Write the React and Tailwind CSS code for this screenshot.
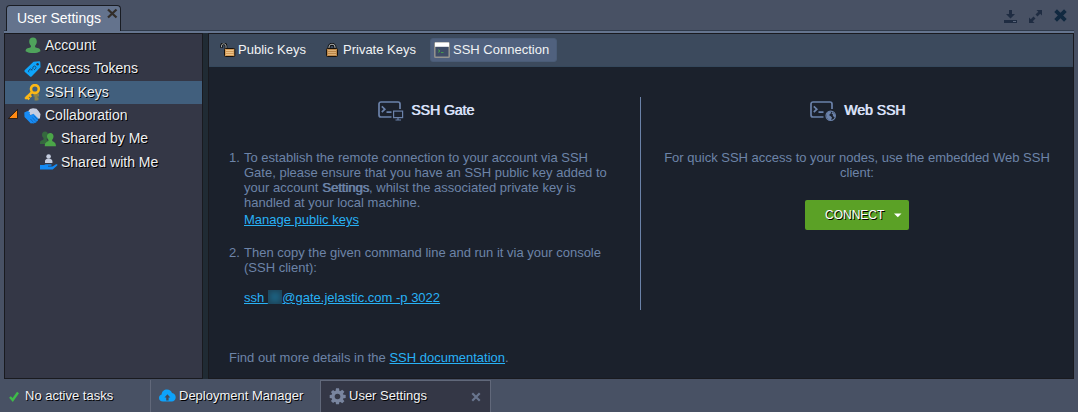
import React from "react";

const shadow = "[text-shadow:1px_1px_0_#000]";

function AccountIcon() {
  return (
    <svg width="16" height="17" viewBox="0 0 16 17" fill="#4fa35c">
      <path d="M8 .5c2.400 0 3.800 1.500 3.800 4 0 1.700-.6 3.200-1.700 4.200v1.300c.6.700 2 .8 3.400 1.200 1.500.6 1.900 1.500 1.900 3C13.500 15.600 10.900 16 8 16S2.500 15.600.6 14.200c0-1.500.4-2.400 1.900-3 1.400-.4 2.800-.5 3.400-1.200V8.700C4.800 7.700 4.200 6.200 4.200 4.500c0-2.500 1.400-4 3.800-4z" />
    </svg>
  );
}

function TagIcon() {
  return (
    <svg width="17" height="16" viewBox="0 0 17 16">
      <path d="M9.500.8 15 .3a1.200 1.200 0 0 1 1.300 1.200l.2 4.800-8.700 9a1.500 1.500 0 0 1-2.100 0L.9 11a1.500 1.500 0 0 1 0-2.100z" fill="#0ea5fb" />
      <circle cx="13.600" cy="3.200" r="1.200" fill="#343746" />
      <path d="M5 11.300a1.500 1.500 0 0 1 0-2.200l1.600-1.300 1.500 1.500M6.800 9.400l3-2.700M8.300 6.600l1.200-1.200a1.500 1.500 0 0 1 2.100 2.100L10 9" fill="none" stroke="#184b78" strokeWidth="1" />
    </svg>
  );
}

function KeyIcon() {
  return (
    <svg width="17" height="17" viewBox="0 0 17 17" fill="none">
      <path d="M9.500 11h5.500M12 8v8.500M12 14.800h2.500" stroke="#8d8349" strokeWidth="2.800" />
      <circle cx="10.900" cy="5" r="3.900" stroke="#fcb815" strokeWidth="2.600" />
      <path d="M8.200 7.800 1.200 14.800M2 12.200l3.300 3.200M4.300 10l3 3" stroke="#fcb815" strokeWidth="2.400" />
    </svg>
  );
}

function HandshakeIcon() {
  return (
    <svg width="17" height="16" viewBox="0 0 17 16">
      <path d="M4 3.500 6 1l3-.8 3.500.6L14.500 3l2 3-.6 4.500-1.600.3L9 6.500 6.500 7 5 6z" fill="#c5cde0" />
      <path d="M.3 4.500 3.500 3 6 4.200 5.500 6.500l1.200.8L9.500 5.800l5 5-.7 1.200.1 1.100-1.500.4-.2 1.200-1.600.1-.6.800-2-.3-1.200.2L3.500 12l-3-3z" fill="#178cf5" />
      <path d="m8.300 9.500 3.500 4M10 7.800l3.600 4M6.500 11l3 3.500" stroke="#1265b5" strokeWidth=".8" />
    </svg>
  );
}

function SharedByIcon() {
  return (
    <svg width="16" height="16" viewBox="0 0 16 16">
      <path d="M5 .5c2 0 3 1.300 3 3.200 0 1.500-.5 2.500-1.200 3.200V9L9 10.500v2.500H0c0-3 .5-3.300 2-3.800L3.500 8.500V6.900C2.600 6.200 2 5.200 2 3.700 2 1.800 3 .5 5 .5z" fill="#35693e" />
      <path d="M10.300 2c2 0 3.200 1.300 3.200 3.300 0 1.500-.5 2.700-1.300 3.500V10c.8.700 3.500.9 3.700 4.300v.9H4.800v-.9c.2-3.400 2.900-3.600 3.600-4.300V8.800C7.500 8 7 6.800 7 5.300 7 3.300 8.300 2 10.300 2z" fill="#4ba548" />
    </svg>
  );
}

function SharedWithIcon() {
  return (
    <svg width="18" height="17" viewBox="0 0 18 17">
      <circle cx="8.600" cy="2.500" r="2.300" fill="#c5cde0" />
      <path d="M5 9V7C5 5.600 6.300 5 7.300 4.700h2.600c1 .3 2.500.9 2.500 2.300v2z" fill="#c5cde0" />
      <path d="M0 11h4l1.800-.8h5c1.300 0 1.300 1.500 0 1.500H8v.7h4.500L16 10.300c1-.5 2 .3 1.200 1.100l-4.500 4.200H0z" fill="#148af4" />
    </svg>
  );
}

function PadlockIcon({ open }) {
  return open ? (
    <svg width="16" height="14" viewBox="0 0 16 14">
      <path d="M1.500 4.800V3A2.200 2.200 0 0 1 6 3v3.500" fill="none" stroke="#0b0c0e" strokeWidth="2.600" />
      <path d="M1.500 4.200V3A2.200 2.200 0 0 1 6 3v3.500" fill="none" stroke="#a5a8a8" strokeWidth="1" />
      <rect x="4.500" y="5.500" width="10.300" height="8" rx="1" fill="#d29a58" stroke="#17120d" />
      <path d="M6 7.500h7.500M6 9.500h7.500M6 11.500h7.500" stroke="#ecc48a" strokeWidth="1" />
    </svg>
  ) : (
    <svg width="12" height="14" viewBox="0 0 12 14">
      <path d="M3 6.500V4.300a3 3 0 0 1 6 0v2.200" fill="none" stroke="#0b0c0e" strokeWidth="2.900" />
      <path d="M3 6.500V4.300a3 3 0 0 1 6 0v2.200" fill="none" stroke="#a5a8a8" strokeWidth="1.100" />
      <rect x=".5" y="5.500" width="11" height="8" rx="1" fill="#bb8648" stroke="#17120d" />
      <path d="M2 7.500h8M2 9.500h8M2 11.500h8" stroke="#dcb076" strokeWidth="1" />
    </svg>
  );
}

function TerminalIcon() {
  return (
    <svg width="16" height="16" viewBox="0 0 16 16">
      <rect x=".8" y=".8" width="14.400" height="14.400" rx=".8" fill="#3e4c66" stroke="#94948f" strokeWidth="1.500" />
      <path d="M1 .5h14v4.300H1z" fill="#fff" />
      <path d="m4 7.500 2 1.500-2 1.500M7 10.500h2.500" fill="none" stroke="#45a249" strokeWidth=".9" />
    </svg>
  );
}

function GateIcon({ web }) {
  return (
    <svg width="27" height="21" viewBox="0 0 27 21" fill="none" stroke="#6b82aa" strokeWidth="1.700">
      <path d="M13.500 16H3a2 2 0 0 1-2-2V3a2 2 0 0 1 2-2h17a2 2 0 0 1 2 2v5" />
      <path d="m3.800 5.300 3 2.900-3 2.900M8.500 11.200h5" />
      {web ? (
        <>
          <circle cx="20.700" cy="14.800" r="4.700" strokeWidth="1.200" />
          <path d="m16.500 13 2-2.500 2.700.5-.7 1.700-1.500 1.300 1.700 1.300 1.300 1.200-1 2.800-2.500-.6-1.700-2.200zM22.500 11l2.500 2.500v3l-2.200-1.500.2-1.500-1.500-1z" fill="#6b82aa" stroke="none" />
        </>
      ) : (
        <>
          <rect x="15.600" y="10.100" width="9" height="6.500" strokeWidth="1.200" />
          <path d="M20 17v2M17.500 19h5.500" strokeWidth="1.200" />
        </>
      )}
    </svg>
  );
}

function Cross({ size, color, width }) {
  return (
    <svg width={size} height={size} viewBox="0 0 12 12">
      <path d="m1.500 1.500 9 9m0-9-9 9" stroke={color} strokeWidth={width} />
    </svg>
  );
}

function CloudIcon() {
  return (
    <svg width="17" height="13" viewBox="0 0 17 13">
      <path d="M4 12.500C1.500 12.500 0 11 0 9c0-1.700 1-3 2.600-3.400C2.800 2.500 5 .5 8 .5c2.500 0 4.200 1.200 5 3.500 2.300.3 3.700 2 3.700 4.300 0 2.700-1.600 4.200-4 4.200z" fill="#0da2fb" />
      <path d="M7.200 11.500V8.500H5.500L8.400 5.300l2.900 3.200H9.600v3z" fill="#414a5c" />
    </svg>
  );
}

function GearIcon() {
  const teeth = [0, 45, 90, 135];
  return (
    <svg width="17" height="17" viewBox="0 0 17 17">
      {teeth.map((a) => (
        <path key={a} d="M7 .3h3l.5 3v10l-.5 3H7l-.5-3v-10z" fill="#79859f" transform={`rotate(${a} 8.500 8.500)`} />
      ))}
      <circle cx="8.500" cy="8.500" r="6" fill="#79859f" />
      <circle cx="8.500" cy="8.500" r="2.800" fill="#343746" />
    </svg>
  );
}

const tree = [
  { label: "Account", icon: <AccountIcon />, box: "pl-[20px]", w: "w-5", lift: "-mt-px" },
  { label: "Access Tokens", icon: <TagIcon />, box: "pl-[19px]", w: "w-[21px]", lift: "-mt-[2px]" },
  { label: "SSH Keys", icon: <KeyIcon />, box: "pl-[19px] bg-[#415f7d]", w: "w-[21px]", lift: "-mt-px" },
  { label: "Collaboration", icon: <HandshakeIcon />, box: "pl-[3px]", w: "w-[21px]", lift: "-mt-px", open: true },
  { label: "Shared by Me", icon: <SharedByIcon />, box: "pl-[35px]", w: "w-[21px]", lift: "-mt-[2px]" },
  { label: "Shared with Me", icon: <SharedWithIcon />, box: "pl-[35px]", w: "w-[21px]", lift: "-mt-px" },
];

function Sidebar() {
  return (
    <nav className="w-[199px] shrink-0 border border-[#191a1f] bg-[#343746]">
      {tree.map((t) => (
        <div key={t.label} className={`flex h-[23.4px] items-center text-[14px] leading-[20px] text-[#eef0f2] ${shadow} ${t.box}`}>
          {t.open && (
            <svg className="mr-[6px] -mt-[3px] shrink-0" width="10" height="10" viewBox="0 0 10 10">
              <path d="M9.500.4v9.100H.4z" fill="#ff8a13" stroke="#15100d" strokeWidth=".8" />
            </svg>
          )}
          <span className={`block shrink-0 ${t.w}`}>{t.icon}</span>
          <span className={`whitespace-nowrap ${t.lift}`}>{t.label}</span>
        </div>
      ))}
    </nav>
  );
}

function Toolbar() {
  return (
    <div className="flex h-[33px] items-center border-b border-[#35485c] bg-[#3c4a5d] pl-[11px] text-[13px] leading-4 text-[#f1f3f5]">
      <div className="flex w-[106px] items-center">
        <span className="w-[18px]"><PadlockIcon open /></span>
        <span>Public Keys</span>
      </div>
      <div className="flex w-[104px] items-center">
        <span className="w-[17px]"><PadlockIcon /></span>
        <span>Private Keys</span>
      </div>
      <div className="flex h-6 w-[127px] items-center gap-[3px] rounded-[3px] border border-[#4a5c77] bg-[#50617e] pl-[3px]">
        <TerminalIcon />
        <span className="whitespace-nowrap">SSH Connection</span>
      </div>
    </div>
  );
}

const link = "text-[#28b2f6] underline";
const heavy = "[text-shadow:0.7px_0_0_currentColor]";

function Content() {
  return (
    <main className="flex min-w-0 grow flex-col border border-[#191a1f] bg-[#1b212c] text-[13px] leading-[15px] text-[#6d84a8]">
      <Toolbar />
      <div className="flex pt-[30px]">
        <section className="h-[213px] w-[432px] shrink-0 border-r border-[#6b82a8] pl-5">
          <div className="flex h-[26px] items-center pl-[149px] text-[14px] leading-[18px] text-[#dbe2fa]">
            <span className="w-[33px] pt-[2px]"><GateIcon /></span>
            <span className={heavy}>SSH Gate</span>
          </div>
          <ol className="pt-[27px]">
            <li className="flex">
              <span className="w-[15px] shrink-0">1.</span>
              <div className="whitespace-nowrap">
                To establish the remote connection to your account via SSH<br />
                Gate, please ensure that you have an SSH public key added to<br />
                your account <span className={heavy}>Settings</span>, whilst the associated private key is<br />
                handled at your local machine.
                <div className="pt-[2px]"><a className={link}>Manage public keys</a></div>
              </div>
            </li>
            <li className="flex pt-[18px]">
              <span className="w-[15px] shrink-0">2.</span>
              <div className="whitespace-nowrap">
                Then copy the given command line and run it via your console<br />
                (SSH client):
                <div className={`flex pt-[15px] ${link}`}>
                  <span className="whitespace-pre">ssh </span>
                  <span className="h-[14px] w-[14.500px] bg-[#1d607f] shadow-[inset_0_0_5px_2px_#1d4459]" />
                  <span>@gate.jelastic.com -p 3022</span>
                </div>
              </div>
            </li>
          </ol>
        </section>
        <section className="grow text-center">
          <div className="flex h-[26px] items-center pl-[169px] text-[14px] leading-[18px] text-[#dbe2fa]">
            <span className="w-[34px] pt-[2px]"><GateIcon web /></span>
            <span className={heavy}>Web SSH</span>
          </div>
          <p className="pt-[27px] whitespace-nowrap">
            For quick SSH access to your nodes, use the embedded Web SSH<br />client:
          </p>
          <button className={`mt-[20px] flex h-[30px] w-[104px] items-center rounded-[2px] bg-[#5ba126] pl-5 text-[12px] text-[#fff] ml-[164px] ${shadow}`}>
            <span className="w-[69px] text-left">CONNECT</span>
            <svg width="8" height="5" viewBox="0 0 8 5"><path d="M0 .5h7.500L3.800 4.300z" fill="#fff" /></svg>
          </button>
        </section>
      </div>
      <p className="pt-[40px] pl-5">
        Find out more details in the <a className={link}>SSH documentation</a>.
      </p>
    </main>
  );
}

function Header() {
  return (
    <header className="z-10 flex h-[30px] items-start justify-between pt-[5px] pr-[11px] pl-[6px]">
      <div className="flex h-[26px] w-[115px] shrink-0 rounded-t-[4px] border border-b-0 border-[#191c23] bg-[#64738d] pt-[2px] pl-[10px] text-[14px] leading-[20px] text-[#fff]">
        <span className="w-[90px] whitespace-nowrap">User Settings</span>
        <svg className="shrink-0" width="11" height="11" viewBox="0 0 11 11">
          <path d="m1 1.500 8.500 8M9.500 1.500l-8.500 8" stroke="#322d29" strokeWidth="2.300" />
        </svg>
      </div>
      <div className="flex items-start pt-1">
        <svg className="mr-[12px] mt-px" width="13" height="13" viewBox="0 0 13 13">
          <path d="M5 0h3v4h3L6.500 8.500 2 4h3zM0 10h13v3H0z" fill="#1f2c42" />
          <path d="M9 11h3v1H9z" fill="#59657b" />
        </svg>
        <svg className="mr-[12px] mt-px" width="13" height="13" viewBox="0 0 13 13" fill="#1f2c42">
          <path d="M7.500 0H13v5.500l-1.800-1.800L8.500 6.500l-2-2 2.800-2.700zM5.500 13H0V7.500l1.800 1.800L4.500 6.500l2 2-2.800 2.700z" />
        </svg>
        <Cross size={13} color="#112940" width={3.5} />
      </div>
    </header>
  );
}

function Taskbar() {
  return (
    <footer className={`flex h-[33px] items-stretch pt-px text-[13px] leading-[16px] text-[#f2f3f5] ${shadow}`}>
      <div className="flex w-[151px] items-center border-r border-[#61687a] pl-[9px]">
        <svg className="mr-[6px]" width="10" height="11" viewBox="0 0 10 11">
          <path d="m1 6 2.700 3L9 1.500" fill="none" stroke="#3ebc49" strokeWidth="2.400" />
        </svg>
        <span className="-mt-px">No active tasks</span>
      </div>
      <div className="flex w-[169px] items-center pl-2">
        <span className="w-5 -mt-px"><CloudIcon /></span>
        <span className="-mt-px">Deployment Manager</span>
      </div>
      <div className="flex w-[171px] items-center border-x border-t border-[#61687a] bg-[#343746] pl-2">
        <span className="-mt-px w-5"><GearIcon /></span>
        <span className="-mt-[2px] w-[122px]">User Settings</span>
        <Cross size={10} color="#69758e" width={2.6} />
      </div>
    </footer>
  );
}

export default function App() {
  return (
    <div className="flex h-[412px] w-[1078px] flex-col overflow-hidden bg-[#485164] font-['Liberation_Sans',Arial,sans-serif] [&_svg]:block">
      <Header />
      <div className="ml-1 h-[3px] w-[1070px] shrink-0 border-t border-[#303b4b] bg-[#65758f]" />
      <div className="ml-1 flex h-[346px] w-[1070px] shrink-0 bg-[#1f2932]">
        <Sidebar />
        <div className="w-[5px] shrink-0 bg-[#202b34]" />
        <Content />
      </div>
      <Taskbar />
    </div>
  );
}
